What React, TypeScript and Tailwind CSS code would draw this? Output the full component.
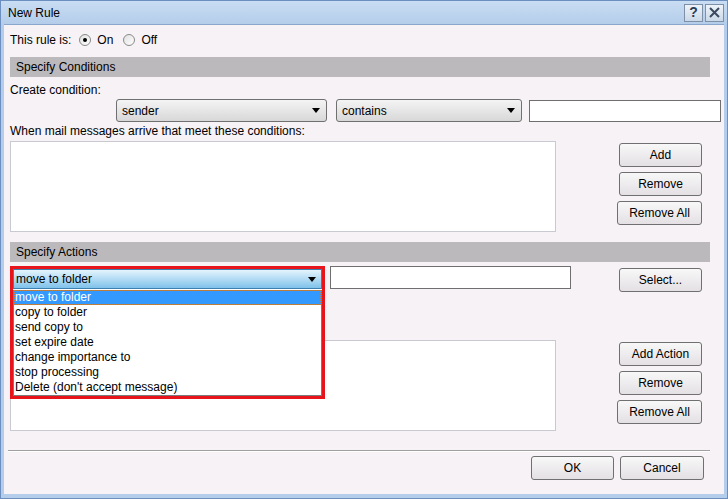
import React from "react";

const font = { fontFamily: '"Liberation Sans", Arial, sans-serif' };

function Btn({ label, w = "w-[83px]" }: { label: string; w?: string }) {
  return (
    <button
      className={`${w} h-[24px] rounded-[3px] border border-[#707070] bg-gradient-to-b from-[#f8f8f8] to-[#e4e0e4] text-[12px] text-black`}
    >
      {label}
    </button>
  );
}

function Arrow() {
  return (
    <svg width="8" height="5" viewBox="0 0 8 5" className="shrink-0">
      <path d="M0 0h8L4 5z" fill="#000" />
    </svg>
  );
}

function Combo({ value, w }: { value: string; w: string }) {
  return (
    <div
      className={`${w} h-[23px] flex items-center justify-between px-[5px] pr-[6px] rounded-[3px] border border-[#707070] bg-gradient-to-b from-[#f4f4f4] to-[#d8d8d8] text-[12px]`}
    >
      <span>{value}</span>
      <Arrow />
    </div>
  );
}

function Radio({ checked }: { checked?: boolean }) {
  return (
    <span className="w-[12px] h-[12px] rounded-full border border-[#8a8a8a] bg-gradient-to-br from-[#e0e0e0] to-white flex items-center justify-center">
      {checked && <span className="w-[4px] h-[4px] rounded-full bg-black" />}
    </span>
  );
}

function Section({ title }: { title: string }) {
  return (
    <div className="w-[700px] h-[20px] bg-[#bcb9bc] flex items-center pl-[6px] text-[12px]">
      {title}
    </div>
  );
}

const actions = [
  "move to folder",
  "copy to folder",
  "send copy to",
  "set expire date",
  "change importance to",
  "stop processing",
  "Delete (don't accept message)",
];

export default function App() {
  return (
    <div
      className="w-[728px] h-[499px] flex flex-col bg-[#b4cdea] border border-[#6d8fbf] text-black select-none"
      style={font}
    >
      {/* title bar */}
      <div className="h-[23px] flex items-center justify-between pl-[7px] pr-[3px] bg-gradient-to-b from-[#c9ddf3] to-[#b4cdea]">
        <span className="text-[12px]">New Rule</span>
        <div className="flex gap-[2px]">
          <div className="w-[19px] h-[18px] border border-[#7d90a8] bg-gradient-to-b from-[#eef3f9] to-[#cbd8e8] flex items-center justify-center text-[14px] font-bold text-[#2b3c55]">
            ?
          </div>
          <div className="w-[19px] h-[18px] border border-[#7d90a8] bg-gradient-to-b from-[#eef3f9] to-[#cbd8e8] flex items-center justify-center">
            <svg width="11" height="11" viewBox="0 0 11 11">
              <path d="M1 1l9 9M10 1l-9 9" stroke="#3b4a60" strokeWidth="2" />
            </svg>
          </div>
        </div>
      </div>

      {/* client area */}
      <div className="relative flex-1 mx-[3px] mb-[4px] bg-[#f6f2f6] border-t border-[#8aa6cc] pl-[6px] text-[12px]">
        <div className="h-[32px] flex items-center gap-[6px] pb-[3px]">
          <span className="mr-[2px]">This rule is:</span>
          <Radio checked />
          <span className="mr-[4px]">On</span>
          <Radio />
          <span>Off</span>
        </div>

        <Section title="Specify Conditions" />

        <div className="h-[21px] flex items-center pt-[5px]">Create condition:</div>
        <div className="flex items-center mt-[1px] h-[23px]">
          <div className="w-[106px]" />
          <Combo value="sender" w="w-[211px]" />
          <div className="w-[9px]" />
          <Combo value="contains" w="w-[186px]" />
          <div className="w-[7px]" />
          <div className="w-[192px] h-[22px] border border-[#6f6f6f] bg-white" />
        </div>
        <div className="h-[19px] flex items-end pb-[1px]">
          When mail messages arrive that meet these conditions:
        </div>
        <div className="flex">
          <div className="w-[546px] h-[91px] bg-white border border-[#c9c9d2]" />
          <div className="ml-[61px] pt-[2px] flex flex-col items-end gap-[5px]">
            <Btn label="Add" />
            <Btn label="Remove" />
            <Btn label="Remove All" w="w-[85px]" />
          </div>
        </div>

        <div className="h-[10px]" />
        <Section title="Specify Actions" />

        <div className="flex mt-[4px] h-[25px]">
          <div className="w-[315px]" />
          <div className="w-[5px]" />
          <div className="w-[241px] h-[23px] border border-[#6f6f6f] bg-white" />
          <div className="ml-[48px] mt-[2px]">
            <Btn label="Select..." />
          </div>
        </div>

        <div className="flex mt-[49px]">
          <div className="w-[546px] h-[91px] bg-white border border-[#c9c9d2]" />
          <div className="ml-[61px] pt-[2px] flex flex-col items-end gap-[5px]">
            <Btn label="Add Action" />
            <Btn label="Remove" />
            <Btn label="Remove All" w="w-[85px]" />
          </div>
        </div>

        <div className="mt-[19px] ml-[-2px] w-[702px] h-[2px] border-t border-[#a0a0a0] border-b border-b-white" />
        <div className="flex justify-end gap-[6px] pr-[20px] mt-[4px]">
          <Btn label="OK" />
          <Btn label="Cancel" w="w-[84px]" />
        </div>

        {/* open dropdown, highlighted */}
        <div className="absolute left-[6px] top-[241px] w-[315px] h-[133px] border-[3px] border-[#e8141c] bg-white">
          <div className="h-[20px] flex items-center justify-between pl-[2px] pr-[5px] border border-[#3c7fb1] bg-gradient-to-b from-[#e4f4fd] to-[#7fc2ea]">
            <span>move to folder</span>
            <Arrow />
          </div>
          <div className="border border-t-0 border-[#7a7a7a] mt-[1px]">
            {actions.map((a, i) => (
              <div
                key={a}
                className={`h-[15px] leading-[15px] pl-[1px] ${
                  i === 0 ? "bg-[#3399ff] text-white outline outline-1 outline-dotted outline-[#c08040] -outline-offset-1" : ""
                }`}
              >
                {a}
              </div>
            ))}
          </div>
        </div>
      </div>
    </div>
  );
}
